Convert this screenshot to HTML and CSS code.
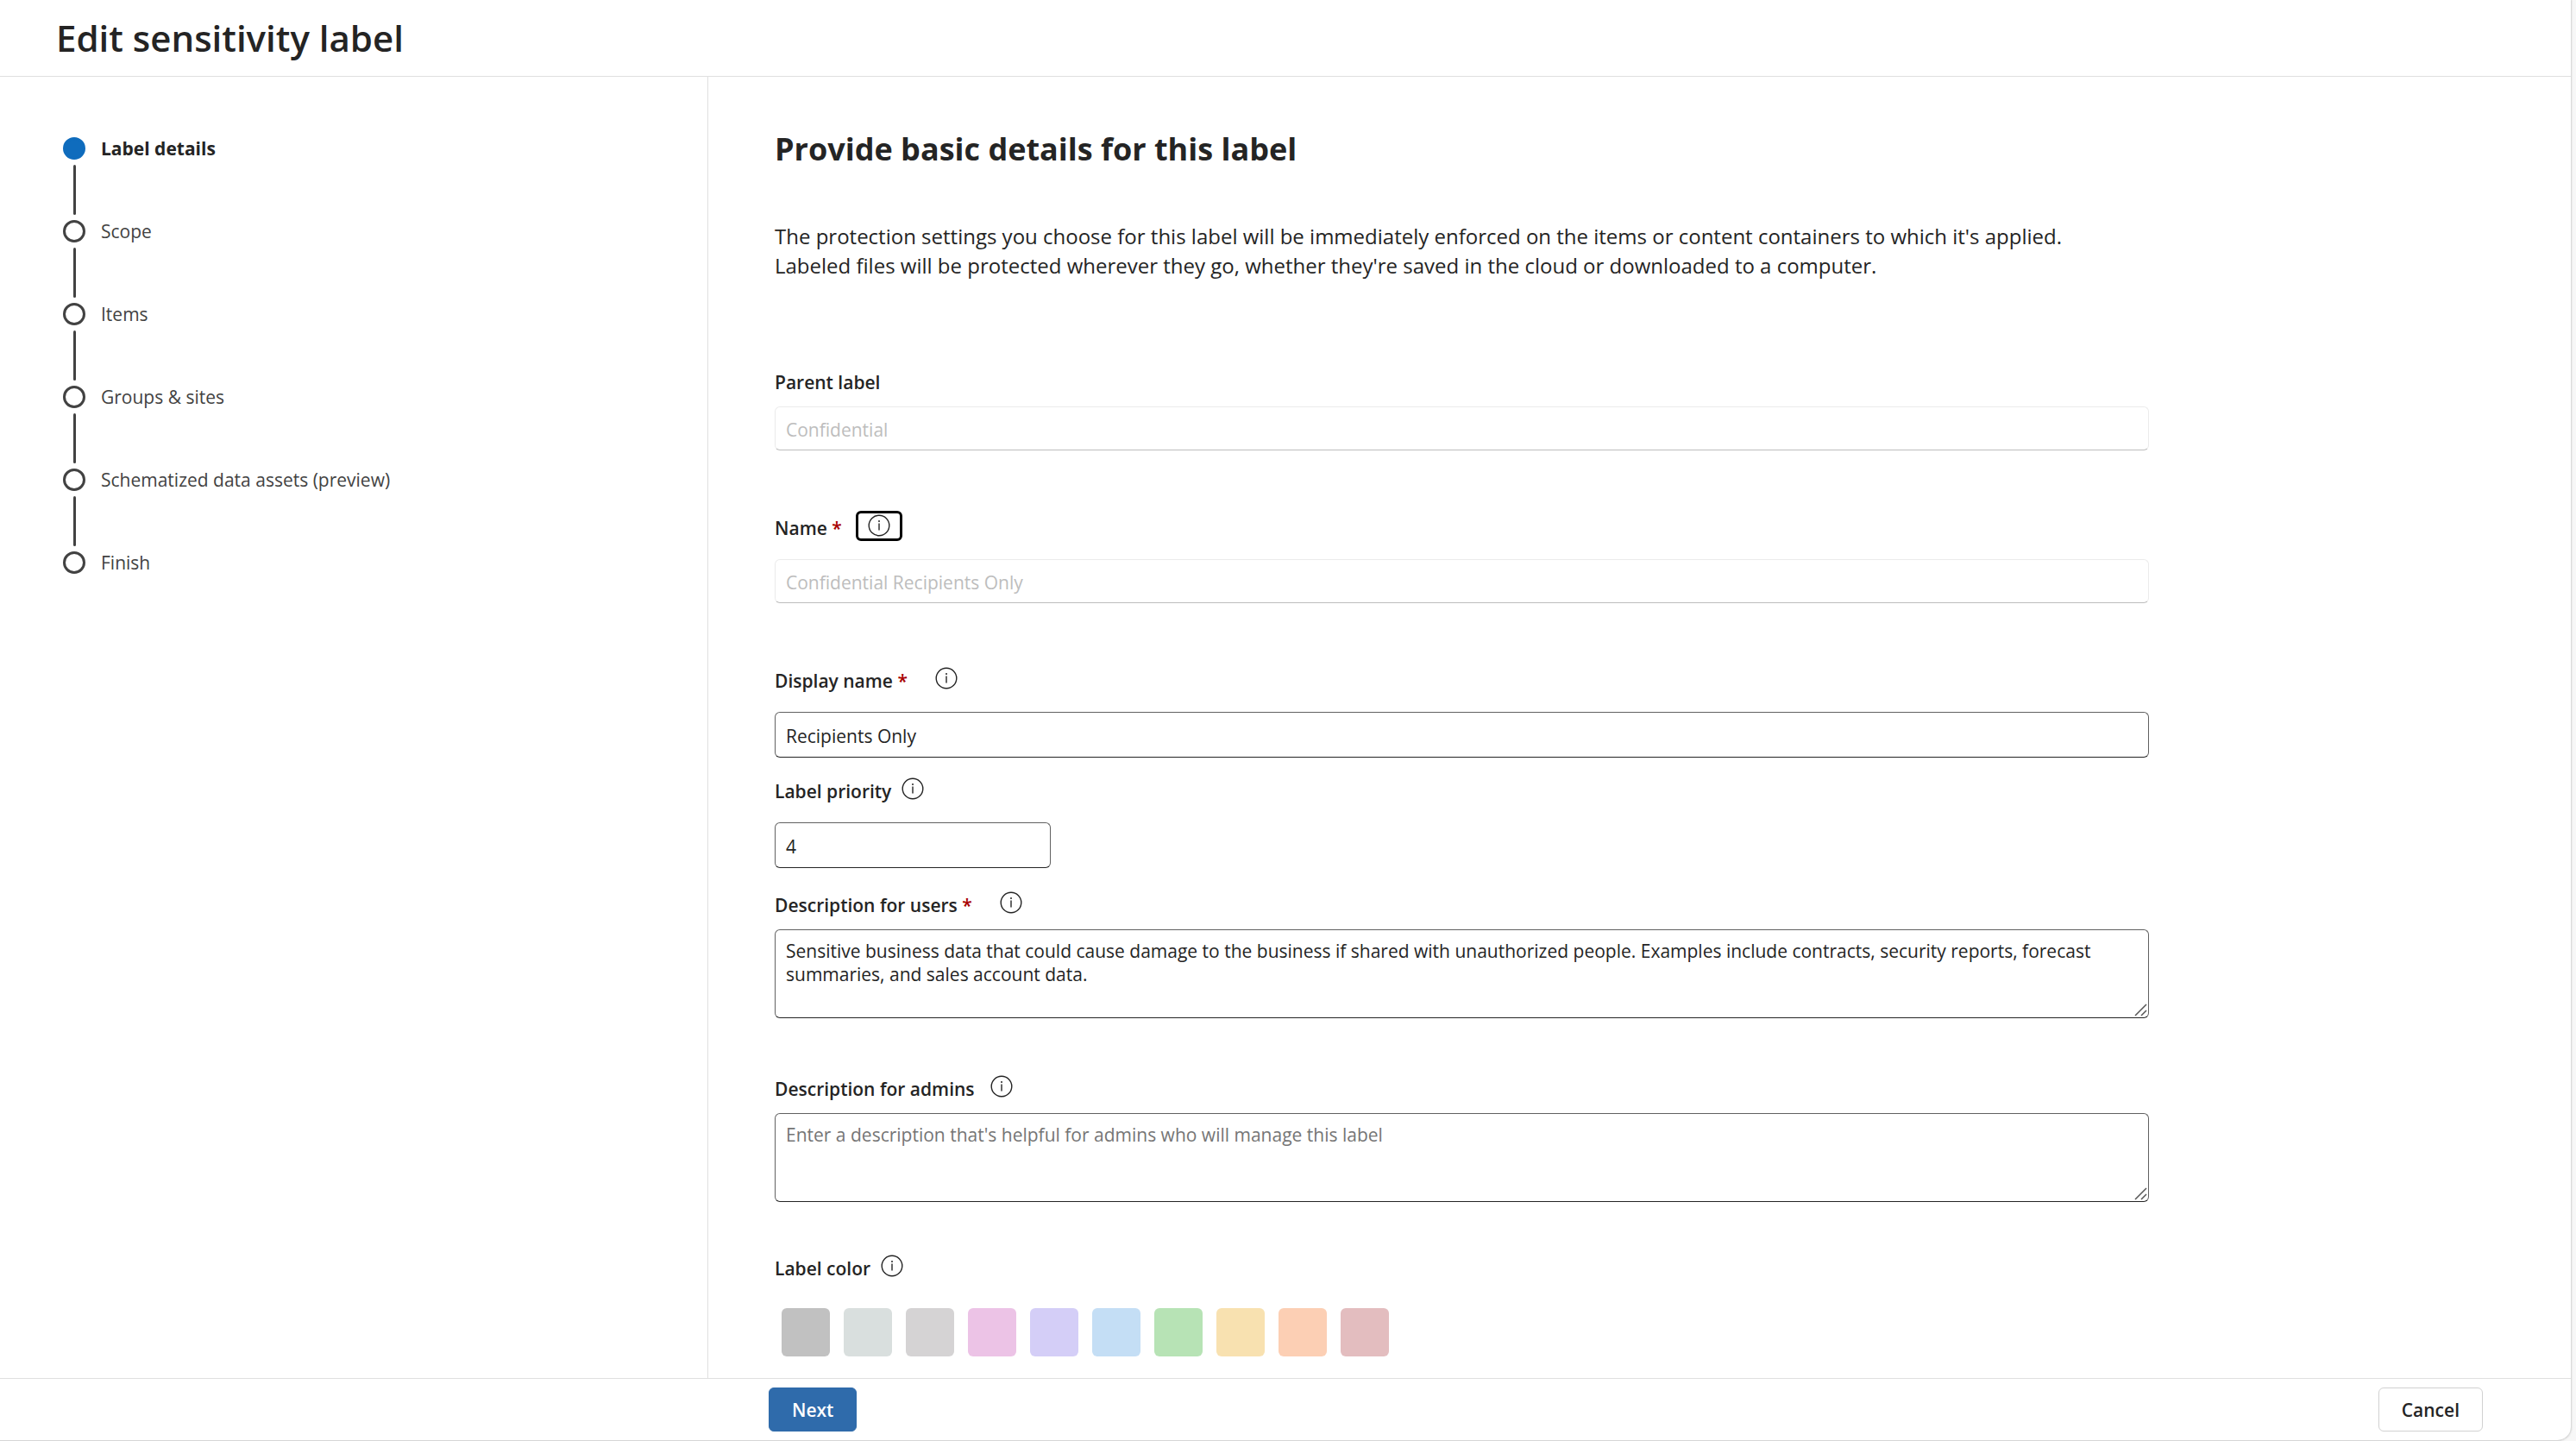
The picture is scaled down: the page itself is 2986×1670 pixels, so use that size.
FILE: index.html
```html
<!DOCTYPE html>
<html lang="en">
<head>
<meta charset="utf-8">
<meta name="viewport" content="width=device-width, initial-scale=1">
<title>Edit sensitivity label</title>
<link rel="stylesheet" href="styles.css">
</head>
<body>
<svg class="sprite" aria-hidden="true">
  <symbol id="info" viewBox="0 0 26 26">
    <circle cx="13" cy="13" r="11.8" fill="none" stroke="currentColor" stroke-width="1.4"/>
    <circle cx="13" cy="8" r="1" fill="currentColor"/>
    <path d="M13 10.5V18.5" fill="none" stroke="currentColor" stroke-width="1.4"/>
  </symbol>
  <symbol id="grip" viewBox="0 0 15 15">
    <path d="M1 14L14 1M8 14L14 8" fill="none" stroke="currentColor" stroke-width="1.5"/>
  </symbol>
</svg>
<div class="panel">
  <header class="header"><h1 class="title">Edit sensitivity label</h1></header>
  <div class="body">
    <nav class="sidebar" aria-label="Steps">
      <ol class="steps">
        <li class="step step-current"><span class="marker"></span><a class="step-link" href="#details" aria-current="step">Label details</a></li>
        <li class="step"><span class="marker"></span><a class="step-link" href="#scope">Scope</a></li>
        <li class="step"><span class="marker"></span><a class="step-link" href="#items">Items</a></li>
        <li class="step"><span class="marker"></span><a class="step-link" href="#groups">Groups &amp; sites</a></li>
        <li class="step"><span class="marker"></span><a class="step-link" href="#assets">Schematized data assets (preview)</a></li>
        <li class="step"><span class="marker"></span><a class="step-link" href="#finish">Finish</a></li>
      </ol>
    </nav>
    <main class="main" id="details">
      <form class="form" id="label-form">
        <h2 class="heading">Provide basic details for this label</h2>
        <p class="intro">The protection settings you choose for this label will be immediately enforced on the items or content containers to which it's applied.<br>Labeled files will be protected wherever they go, whether they're saved in the cloud or downloaded to a computer.</p>

        <div class="field field-parent">
          <div class="label-row"><label class="label" for="parent">Parent label</label></div>
          <input class="input" id="parent" type="text" value="Confidential" disabled>
        </div>

        <div class="field field-name">
          <div class="label-row">
            <label class="label" for="name">Name <span class="required">*</span></label>
            <button class="info info-focused" type="button" aria-label="About name"><svg class="icon"><use href="#info"/></svg></button>
          </div>
          <input class="input" id="name" type="text" value="Confidential Recipients Only" disabled>
        </div>

        <div class="field field-display">
          <div class="label-row">
            <label class="label" for="display">Display name <span class="required">*</span></label>
            <button class="info info-required" type="button" aria-label="About display name"><svg class="icon"><use href="#info"/></svg></button>
          </div>
          <input class="input" id="display" type="text" value="Recipients Only">
        </div>

        <div class="field field-priority">
          <div class="label-row">
            <label class="label" for="priority">Label priority</label>
            <button class="info" type="button" aria-label="About label priority"><svg class="icon"><use href="#info"/></svg></button>
          </div>
          <input class="input input-short" id="priority" type="text" value="4">
        </div>

        <div class="field field-users">
          <div class="label-row">
            <label class="label" for="users">Description for users <span class="required">*</span></label>
            <button class="info info-required" type="button" aria-label="About description for users"><svg class="icon"><use href="#info"/></svg></button>
          </div>
          <div class="area-wrap">
            <textarea class="area" id="users">Sensitive business data that could cause damage to the business if shared with unauthorized people. Examples include contracts, security reports, forecast summaries, and sales account data.</textarea>
            <svg class="grip"><use href="#grip"/></svg>
          </div>
        </div>

        <div class="field field-admins">
          <div class="label-row">
            <label class="label" for="admins">Description for admins</label>
            <button class="info" type="button" aria-label="About description for admins"><svg class="icon"><use href="#info"/></svg></button>
          </div>
          <div class="area-wrap">
            <textarea class="area" id="admins" placeholder="Enter a description that's helpful for admins who will manage this label"></textarea>
            <svg class="grip"><use href="#grip"/></svg>
          </div>
        </div>

        <div class="field field-color" role="radiogroup" aria-labelledby="color-label">
          <div class="label-row">
            <span class="label" id="color-label">Label color</span>
            <button class="info" type="button" aria-label="About label color"><svg class="icon"><use href="#info"/></svg></button>
          </div>
          <div class="swatches">
            <input class="swatch charcoal" type="radio" name="color" aria-label="Charcoal">
            <input class="swatch mist" type="radio" name="color" aria-label="Mist">
            <input class="swatch gray" type="radio" name="color" aria-label="Gray">
            <input class="swatch pink" type="radio" name="color" aria-label="Pink">
            <input class="swatch lavender" type="radio" name="color" aria-label="Lavender">
            <input class="swatch blue" type="radio" name="color" aria-label="Blue">
            <input class="swatch green" type="radio" name="color" aria-label="Green">
            <input class="swatch yellow" type="radio" name="color" aria-label="Yellow">
            <input class="swatch orange" type="radio" name="color" aria-label="Orange">
            <input class="swatch red" type="radio" name="color" aria-label="Red">
          </div>
        </div>
      </form>
    </main>
  </div>
  <footer class="footer">
    <button class="button button-primary" type="submit" form="label-form">Next</button>
    <button class="button" type="button">Cancel</button>
  </footer>
</div>
</body>
</html>
```
FILE: styles.css
```css
*, *::before, *::after { box-sizing: border-box; }

body {
  margin: 0;
  background: #f7f7f7;
  color: #242424;
  font: 400 21px/32px "Open Sans", "Noto Sans", sans-serif;
}

button, input, textarea { font: inherit; color: inherit; }

.sprite { display: none; }

.panel {
  display: flex;
  flex-direction: column;
  height: 100vh;
  margin-right: 6px;
  background: #fff;
  border-bottom: 1px solid #d6d6d6;
  border-bottom-right-radius: 16px;
  box-shadow: 1px 0 2px #d0d0d0;
}

.header {
  padding: 16px 65px;
  border-bottom: 1px solid #e0e0e0;
}

.title { margin: 0; font-size: 42px; line-height: 56px; font-weight: 600; }

.body { display: flex; flex: 1; min-height: 0; }

.sidebar {
  flex: 0 1 821px;
  padding: 70px 73px;
  border-right: 1px solid #e0e0e0;
}

.steps { margin: 0; padding: 0; list-style: none; }

.step { display: flex; gap: 18px; color: #424242; line-height: 26px; }
.step-current { color: #242424; font-weight: 700; }
.step-link { color: inherit; text-decoration: none; }

.marker { display: flex; flex-direction: column; align-items: center; gap: 6px; padding-bottom: 6px; }
.marker::before {
  content: "";
  width: 26px;
  height: 26px;
  border: 3px solid #424242;
  border-radius: 50%;
}
.marker::after { content: ""; width: 3px; height: 58px; border-radius: 2px; background: #424242; }
.step-current .marker::before { border-color: #0f6cbd; background: #0f6cbd; }
.step:last-child .marker::after { display: none; }

.main { flex: 1; min-width: 0; padding: 60px 77px 0; overflow: hidden; }
.form { max-width: 1593px; }

.heading { margin: 0; font-size: 36px; line-height: 48px; font-weight: 700; }
.intro { margin: 60px 0 0; font-size: 24px; line-height: 34px; }

.field { display: flex; flex-direction: column; gap: 20px; }
.field-parent { gap: 12px; margin-top: 102px; }
.field-name, .field-display { margin-top: 74px; }
.field-priority { margin-top: 23px; }
.field-users { gap: 12px; margin-top: 27px; }
.field-admins { gap: 12px; margin-top: 66px; }
.field-admins .info { margin-left: 6px; }
.field-color { gap: 30px; margin-top: 61px; }

.label-row { display: flex; align-items: flex-start; gap: 12px; height: 32px; }
.label { font-weight: 600; }
.required { color: #a80000; }

.info { display: flex; padding: 0; border: 0; background: none; }
.info-required { margin-left: 20px; }
.info-focused {
  justify-content: center;
  width: 54px;
  height: 35px;
  margin: -4px 0 0 4px;
  padding-top: 1px;
  border: 3px solid #000;
  border-radius: 6px;
}
.icon { width: 26px; height: 26px; }

.input, .area {
  width: 100%;
  border: 1px solid #616161;
  border-bottom-color: #242424;
  border-radius: 6px;
  background: #fff;
}
.input { height: 53px; padding: 2px 12px 0; }
.input:disabled { height: 51px; border-color: #ebebeb #ebebeb #bdbdbd; color: #bdbdbd; }
.input-short { width: 320px; }

.area-wrap { position: relative; display: flex; }
.area { height: 103px; padding: 11px 12px; line-height: 27px; resize: none; }
.area::placeholder { color: #757575; }
.grip { position: absolute; right: 2px; bottom: 2px; width: 15px; height: 15px; color: #555; }

.swatches { display: flex; gap: 16px; padding-left: 8px; }
.swatch { appearance: none; width: 56px; height: 56px; margin: 0; border-radius: 6px; }
.charcoal { background: #c1c1c1; }
.mist { background: #d9dfde; }
.gray { background: #d5d3d4; }
.pink { background: #ecc3e6; }
.lavender { background: #d4cef7; }
.blue { background: #c4def5; }
.green { background: #b7e3b5; }
.yellow { background: #f8e1b0; }
.orange { background: #fccfb4; }
.red { background: #e3bdbf; }

.footer {
  display: flex;
  justify-content: space-between;
  padding: 10px 102px 10px 891px;
  border-top: 1px solid #e0e0e0;
}
.button {
  height: 51px;
  padding: 0 26px;
  border: 1px solid #d1d1d1;
  border-radius: 6px;
  background: #fff;
  font-weight: 600;
}
.button-primary { border-color: #2f6bab; background: #2f6bab; color: #fff; }
```
